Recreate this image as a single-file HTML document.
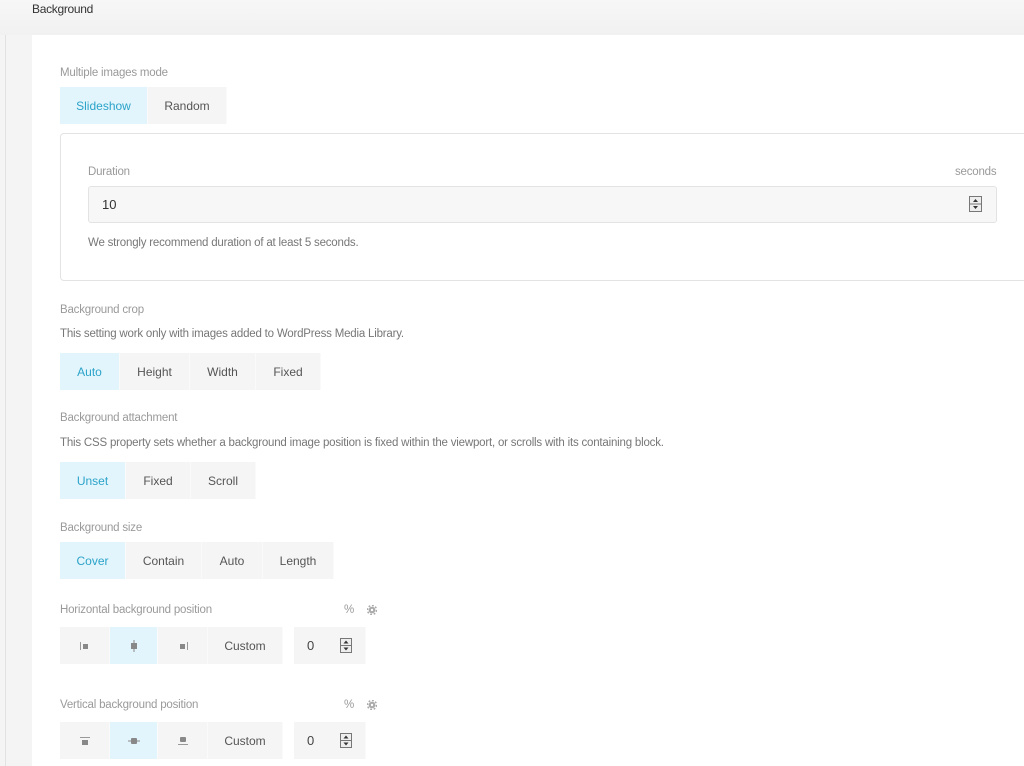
<!DOCTYPE html>
<html><head><meta charset="utf-8"><style>
*{margin:0;padding:0;box-sizing:border-box}
body{width:1024px;height:766px;overflow:hidden;background:#f4f4f4;font-family:"Liberation Sans",sans-serif;position:relative}
.a{position:absolute}
.edge{left:5px;top:0;width:1px;height:766px;background:#e2e2e2}
.panel{left:32px;top:35px;width:992px;height:731px;background:#fff}
.lbl{font-size:11.5px;color:#9a9a9a;letter-spacing:-0.2px}
.desc{font-size:11.5px;color:#777;letter-spacing:-0.2px}
.b{position:absolute;background:#f5f5f5;font-size:12px;color:#555;display:flex;align-items:center;justify-content:center;height:37px;border-right:1px solid #fafafa}
.b.on{background:#e3f5fc;color:#2ba3c9}
.sp{display:inline-block;width:11px;height:14px;border:1px solid #888;background:#f0f0f0;position:relative}
</style></head><body>
<div class="a edge"></div>
<div class="a" style="left:0;top:0;width:1024px;height:35px;background:linear-gradient(#f7f7f7,#f1f1f1)"></div>
<div class="a" style="left:32px;top:2px;font-size:12px;color:#333;letter-spacing:-0.3px">Background</div>
<div class="a panel"></div>

<div class="a lbl" style="left:60px;top:67px">Multiple images mode</div>
<div class="b on" style="left:60px;top:87px;width:88px">Slideshow</div>
<div class="b" style="left:148px;top:87px;width:79px">Random</div>

<div class="a" style="left:60px;top:133px;width:980px;height:148px;border:1px solid #e3e3e3;border-radius:4px"></div>
<div class="a lbl" style="left:88px;top:166px">Duration</div>
<div class="a lbl" style="left:955px;top:166px">seconds</div>
<div class="a" style="left:88px;top:186px;width:909px;height:37px;background:#f7f7f7;border:1px solid #e3e3e3;border-radius:3px"></div>
<div class="a" style="left:102px;top:197px;font-size:13px;color:#333">10</div>
<svg class="a" style="left:969px;top:196px" width="14" height="17" viewBox="0 0 14 17"><rect x="0.5" y="0.5" width="12" height="15" fill="#eee" stroke="#777"/><line x1="1" y1="8" x2="12" y2="8" stroke="#777"/><path d="M4 6L6.5 3L9 6Z M4 10L6.5 13L9 10Z" fill="#333"/></svg>
<div class="a desc" style="left:88px;top:237px">We strongly recommend duration of at least 5 seconds.</div>

<div class="a lbl" style="left:60px;top:304px">Background crop</div>
<div class="a desc" style="left:60px;top:328px">This setting work only with images added to WordPress Media Library.</div>
<div class="b on" style="left:60px;top:353px;width:60px">Auto</div>
<div class="b" style="left:120px;top:353px;width:70px">Height</div>
<div class="b" style="left:190px;top:353px;width:66px">Width</div>
<div class="b" style="left:256px;top:353px;width:65px">Fixed</div>

<div class="a lbl" style="left:60px;top:412px">Background attachment</div>
<div class="a desc" style="left:60px;top:437px">This CSS property sets whether a background image position is fixed within the viewport, or scrolls with its containing block.</div>
<div class="b on" style="left:60px;top:462px;width:66px">Unset</div>
<div class="b" style="left:126px;top:462px;width:65px">Fixed</div>
<div class="b" style="left:191px;top:462px;width:65px">Scroll</div>

<div class="a lbl" style="left:60px;top:522px">Background size</div>
<div class="b on" style="left:60px;top:542px;width:66px">Cover</div>
<div class="b" style="left:126px;top:542px;width:76px">Contain</div>
<div class="b" style="left:202px;top:542px;width:61px">Auto</div>
<div class="b" style="left:263px;top:542px;width:71px">Length</div>

<div class="a lbl" style="left:60px;top:604px">Horizontal background position</div>
<div class="a lbl" style="left:344px;top:604px">%</div>
<svg class="a" style="left:367px;top:605px" width="10" height="10" viewBox="0 0 10 10"><circle cx="5" cy="5" r="3.3" fill="#aaa"/><circle cx="5" cy="5" r="4.5" fill="none" stroke="#aaa" stroke-width="1.6" stroke-dasharray="1.8 1.7"/><circle cx="5" cy="5" r="1.2" fill="#fff"/></svg>
<div class="b" style="left:60px;top:627px;width:50px"><svg width="10" height="10"><rect x="0" y="1" width="1" height="8" fill="#999"/><rect x="3" y="3" width="5" height="5" fill="#888"/></svg></div>
<div class="b on" style="left:110px;top:627px;width:48px"><svg width="8" height="12"><rect x="3.5" y="0" width="1" height="12" fill="#888"/><rect x="1" y="3" width="6" height="6" fill="#888"/></svg></div>
<div class="b" style="left:158px;top:627px;width:50px"><svg width="10" height="10"><rect x="9" y="1" width="1" height="8" fill="#999"/><rect x="2" y="3" width="5" height="5" fill="#888"/></svg></div>
<div class="b" style="left:208px;top:627px;width:75px">Custom</div>
<div class="b" style="left:294px;top:627px;width:72px;justify-content:flex-start;padding-left:13px;font-size:13px;color:#444">0<svg style="position:absolute;left:46px;top:11px" width="13" height="15" viewBox="0 0 13 15"><rect x="0.5" y="0.5" width="11" height="14" fill="#eee" stroke="#777"/><line x1="1" y1="7.5" x2="11" y2="7.5" stroke="#777"/><path d="M3.5 5.5L6 2.5L8.5 5.5Z M3.5 9.5L6 12.5L8.5 9.5Z" fill="#333"/></svg></div>

<div class="a lbl" style="left:60px;top:699px">Vertical background position</div>
<div class="a lbl" style="left:344px;top:699px">%</div>
<svg class="a" style="left:367px;top:700px" width="10" height="10" viewBox="0 0 10 10"><circle cx="5" cy="5" r="3.3" fill="#aaa"/><circle cx="5" cy="5" r="4.5" fill="none" stroke="#aaa" stroke-width="1.6" stroke-dasharray="1.8 1.7"/><circle cx="5" cy="5" r="1.2" fill="#fff"/></svg>
<div class="b" style="left:60px;top:722px;width:50px"><svg width="10" height="8"><rect x="0" y="0" width="10" height="1" fill="#999"/><rect x="2" y="3" width="6" height="5" fill="#888"/></svg></div>
<div class="b on" style="left:110px;top:722px;width:48px"><svg width="12" height="8"><rect x="0" y="3.5" width="12" height="1" fill="#888"/><rect x="3" y="1" width="6" height="6" rx="1" fill="#888"/></svg></div>
<div class="b" style="left:158px;top:722px;width:50px"><svg width="10" height="8"><rect x="0" y="7" width="10" height="1" fill="#999"/><rect x="2" y="0" width="6" height="5" rx="1" fill="#888"/></svg></div>
<div class="b" style="left:208px;top:722px;width:75px">Custom</div>
<div class="b" style="left:294px;top:722px;width:72px;justify-content:flex-start;padding-left:13px;font-size:13px;color:#444">0<svg style="position:absolute;left:46px;top:11px" width="13" height="15" viewBox="0 0 13 15"><rect x="0.5" y="0.5" width="11" height="14" fill="#eee" stroke="#777"/><line x1="1" y1="7.5" x2="11" y2="7.5" stroke="#777"/><path d="M3.5 5.5L6 2.5L8.5 5.5Z M3.5 9.5L6 12.5L8.5 9.5Z" fill="#333"/></svg></div>
</body></html>
